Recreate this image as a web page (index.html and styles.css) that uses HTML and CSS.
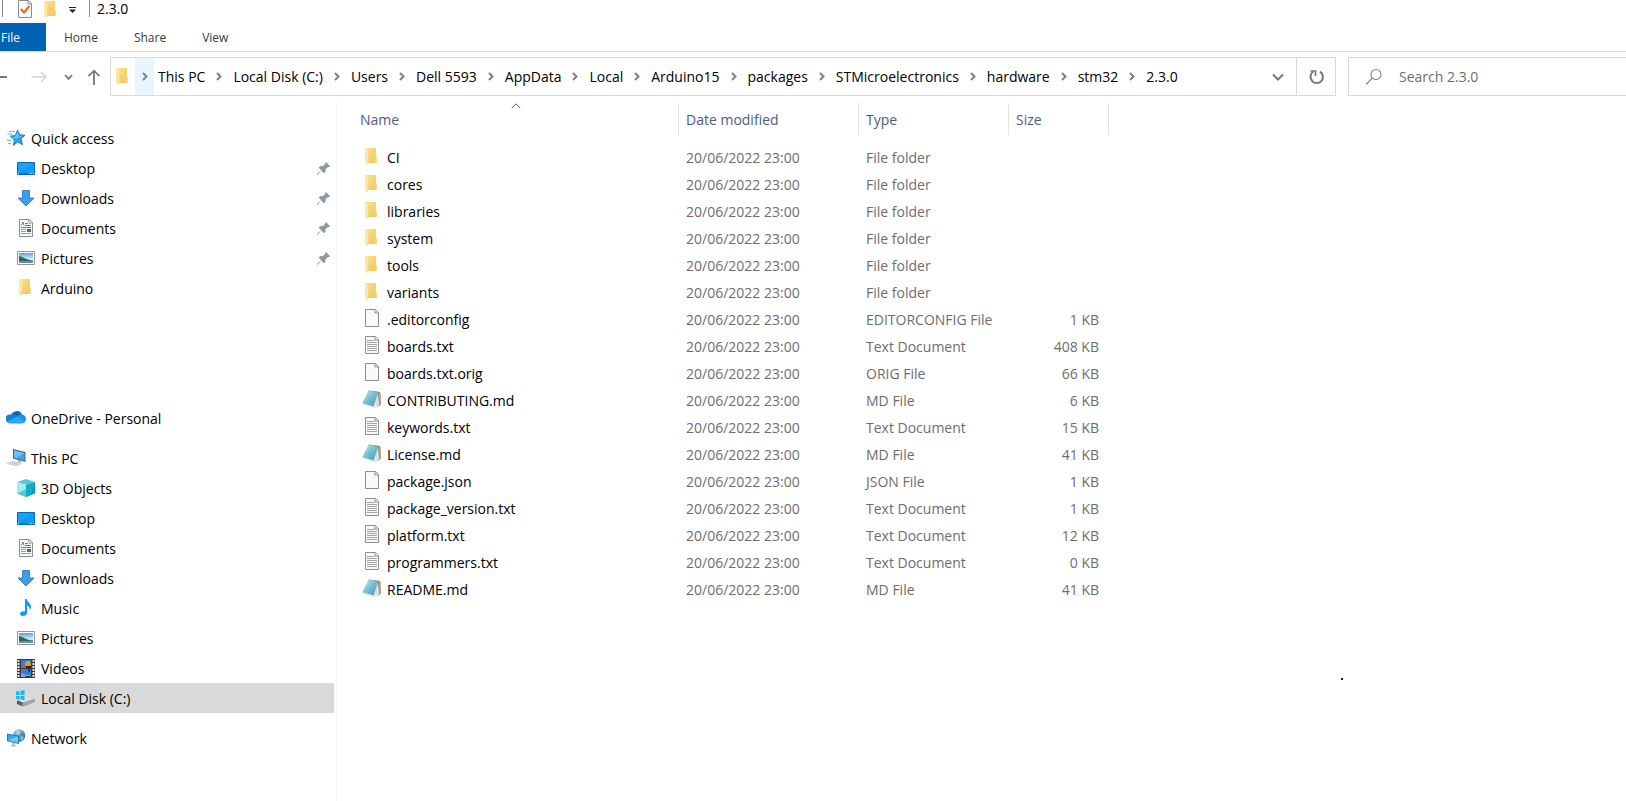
FILE: index.html
```html
<!DOCTYPE html>
<html lang="en">
<head>
<meta charset="utf-8">
<title>2.3.0</title>
<link rel="stylesheet" href="styles.css">
</head>
<body>
<svg class="sprite" aria-hidden="true">
  <defs>
    <linearGradient id="gFolder" x1="0" y1="0" x2="1" y2="1"><stop offset="0" stop-color="#ffe392"/><stop offset=".5" stop-color="#f6d375"/><stop offset="1" stop-color="#eec661"/></linearGradient>
    <linearGradient id="gFolderR" x1="0" x2="1"><stop offset="0" stop-color="#f0cb68"/><stop offset="1" stop-color="#ffe08a"/></linearGradient>
    <linearGradient id="gDesk" x1="0" y1="0" x2="1" y2="1"><stop offset="0" stop-color="#1ba1f8"/><stop offset=".5" stop-color="#16a0ff"/><stop offset=".52" stop-color="#0b95f5"/><stop offset="1" stop-color="#19a4ff"/></linearGradient>
    <linearGradient id="gSky" x1="0" y1="0" x2="0" y2="1"><stop offset="0" stop-color="#5e9fea"/><stop offset=".6" stop-color="#d9ecfa"/><stop offset="1" stop-color="#a8cbe0"/></linearGradient>
    <linearGradient id="gNote" x1="0" y1="0" x2="1" y2="1"><stop offset="0" stop-color="#c9e9f0"/><stop offset=".5" stop-color="#75bfd0"/><stop offset="1" stop-color="#3f9db5"/></linearGradient>
    <linearGradient id="gDisk" x1="0" x2="1"><stop offset="0" stop-color="#4c4f50"/><stop offset="1" stop-color="#b5b7b8"/></linearGradient>
    <linearGradient id="gGlobe" x1="0" y1="0" x2="1" y2="1"><stop offset="0" stop-color="#a7d4ea"/><stop offset="1" stop-color="#15618d"/></linearGradient>
  </defs>
  <symbol id="folder" viewBox="0 0 20 20">
    <path d="M3 1h11v9l1 1v5H5z" fill="url(#gFolder)"/>
    <path d="M12 1h2v9l1 1v5h-3z" fill="url(#gFolderR)" opacity=".8"/>
    <path d="M3 1.3l3.6 1.4V14l-1.2 4L3 16z" fill="#ffe8a5"/>
    <path d="M6.4 3v11.3l-1 3.4" fill="none" stroke="#f0d078" stroke-width=".6"/>
  </symbol>
  <symbol id="file" viewBox="0 0 20 20">
    <path d="M3.5.5h10l3 3v14h-13z" fill="#f8fafc" stroke="#8d8d8d"/>
    <path d="M13 .5v3.5h3.5" fill="#fff" stroke="#8d8d8d"/>
  </symbol>
  <symbol id="text" viewBox="0 0 20 20">
    <path d="M3.5.5h10l3 3v14h-13z" fill="#f8f8f8" stroke="#8d8d8d"/>
    <path d="M13 .5v3.5h3.5" fill="#fff" stroke="#8d8d8d"/>
    <path d="M5 4.5h7M5 6.5h10M5 8.5h10M5 10.5h10M5 12.5h10M5 14.5h10" stroke="#a5a5a5"/>
  </symbol>
  <symbol id="md" viewBox="0 0 20 20">
    <path d="M7 .5l10 1.2 1.6 1.5.2 11.3-2.8 2.5-3-4z" fill="#8d8067"/>
    <path d="M16.8 2.2l-.4 13.2 1.200-.8.500-10.800z" fill="#b9ab8b"/>
    <path d="M15.500 3.600L17 14.800l-1 2.600-5.200.500z" fill="#e4edf2"/>
    <path d="M15.400 4.200L14 12l2.200 5" fill="none" stroke="#b4c7d1" stroke-width=".7"/>
    <path d="M6.500.8l9.300 1.500-4 14.200L.2 13.300z" fill="url(#gNote)"/>
    <path d="M6.500 1l9.200 1.500" stroke="#9eb1b8" stroke-dasharray="1 1"/>
    <path d="M.2 13.400l11.400 3.200 1 1.200L1 14.600z" fill="#c9dce4"/>
  </symbol>
  <symbol id="star" viewBox="0 0 20 20">
    <path d="M11.500 2l2.200 4.800 5.300.4-4 3.600 1.600 6-5-2.800-4.200 3.400.9-5.500-4-3.800 5-.5z" fill="#2f9fe8" stroke="#1272b8" stroke-width=".8"/>
    <path d="M11.300 4l1.600 3.700 3.600.4-6.300 2.400-5-.9 4-.8z" fill="#67c3f8"/>
    <path d="M3 3.500h6M1.500 6h5M1 12.500h4M2 15.500h3" stroke="#5db6ea"/>
  </symbol>
  <symbol id="desktop" viewBox="0 0 20 20">
    <path d="M1.500 4.500h17v12h-17z" fill="url(#gDesk)" stroke="#0669ad"/>
    <path d="M2 15.500h16" stroke="#0b74c2"/>
    <path d="M2 15.500h1M13 15.500h1M15 15.500h1M17 15.500h1" stroke="#fff"/>
  </symbol>
  <symbol id="download" viewBox="0 0 20 20">
    <path d="M6.500 2.500h7V10H18l-8 8-8-8h4.500z" fill="#3e9dea" stroke="#2573bd" stroke-width=".8"/>
  </symbol>
  <symbol id="document" viewBox="0 0 20 20">
    <path d="M3.500 1.500h10l3 3v14h-13z" fill="#fbfbfb" stroke="#8d8d8d"/>
    <path d="M13 1.500v3.500h3.500" fill="#fff" stroke="#8d8d8d"/>
    <path d="M5 7.500L7 4l1 3.500M9 5.500h3M9 7.500h6M5 9.500h10" fill="none" stroke="#2490dc"/>
    <path d="M5 11.500h5M5 13.500h5M5 15.500h10" stroke="#9d9d9d"/>
    <path d="M11 11h4v3h-4z" fill="#2f6fac"/>
  </symbol>
  <symbol id="picture" viewBox="0 0 20 20">
    <path d="M1.500 3.500h17v13h-17z" fill="#fff" stroke="#969696"/>
    <path d="M3 5h14v10H3z" fill="url(#gSky)"/>
    <path d="M3 8c3 0 6 4 14 4.500V13H3z" fill="#2f6553"/>
    <path d="M3 13h14v2H3z" fill="#6293ab"/>
  </symbol>
  <symbol id="cloud" viewBox="0 0 20 20">
    <path d="M5 8a5.800 5.800 0 0 1 11-1.500L18 13 3 13z" fill="#0f64b8"/>
    <path d="M4 6.500q4-1 7 2L3.500 15A4.200 4.200 0 0 1 4 6.500z" fill="#1381d8"/>
    <path d="M11 8.500q2-2.500 5-2 4 .7 4 4.500 0 3-2.500 4z" fill="#1b93e6"/>
    <path d="M1 13.500L11 8.500l8 5q-1 2-3 2H4q-2 0-3-2z" fill="#29a9ec"/>
  </symbol>
  <symbol id="pc" viewBox="0 0 20 20">
    <path d="M7 1l12.500 3v10L7 10.500z" fill="#53646f"/>
    <path d="M8.200 2.400L18.500 5v7.700L8.200 9.600z" fill="#35a5ee"/>
    <path d="M8.200 2.400L18.500 5l-8 5.300-2.300-.7z" fill="#69c1f6"/>
    <path d="M12 12l3 1v3l-4-1z" fill="#adb5b9"/>
    <path d="M1 15l6-2 10 2.500-5 2.500z" fill="#d9dce3"/>
    <path d="M1 15.300l10 2.700M4 14l9 2.500" stroke="#aeb3bd" stroke-width=".7"/>
  </symbol>
  <symbol id="cube" viewBox="0 0 20 20">
    <path d="M1 4l9-3 9 3-9 3z" fill="#58cbd8"/>
    <path d="M1 4l9 3v12l-9-3.500z" fill="#a6edf0"/>
    <path d="M1 15.500L10 11v8z" fill="#4ecbd7"/>
    <path d="M10 7l9-3v11.500L10 19z" fill="#079cb7"/>
    <path d="M10 7l9-3-4 13-5 2z" fill="#18abc4"/>
  </symbol>
  <symbol id="music" viewBox="0 0 20 20">
    <path d="M9 1h1.600c.4 3 5 4.500 4.400 9l-1.400 2c.3-3-1-4.200-2.600-4.600V15c0 1.700-2 3-4.200 3S4 17 4 15.600 6 13 9 13.200z" fill="#0a9cf4"/>
  </symbol>
  <symbol id="video" viewBox="0 0 20 20">
    <path d="M1 1h18v19H1z" fill="#3b3b3b"/>
    <path d="M2.500 2v18M17.500 2v18" stroke="#e7e7e7" stroke-width="2" stroke-dasharray="2 1"/>
    <path d="M5 2h10v8H5zM5 11h10v8H5z" fill="#3f78d8"/>
    <path d="M9 5l2-2h3l1 3-1 3h-4z" fill="#d8a11e"/>
    <path d="M5 8h5v2H5z" fill="#d83f5b"/>
    <path d="M10 8h5v2h-5zM12 11h2v3h-1zM9 17h5v2H9z" fill="#272416"/>
    <path d="M5 15l4 1 1 3H5z" fill="#78a5e9"/>
    <path d="M10 17h4v1h-4z" fill="#edb82b"/>
  </symbol>
  <symbol id="disk" viewBox="0 0 20 20">
    <path d="M1 13l7-4 11 2v3L7 18.500 1 16z" fill="url(#gDisk)"/>
    <path d="M2 12.500L8 8.500l10.500 2.200L7 14.500z" fill="#e2e4e5"/>
    <path d="M7 14.500l12-3.500v3L7 18z" fill="#a4a6a7"/>
    <path d="M6 16.500h1.500v1H6z" fill="#51da68"/>
    <path d="M0 3.500l3.500-.500v4H0zM4.500 2.800L8.500 2v5h-4zM0 8h3.500v3.500L0 11zM4.500 8h4v4.200l-4-.6z" fill="#16b8ef"/>
  </symbol>
  <symbol id="network" viewBox="0 0 20 20">
    <circle cx="13" cy="7.500" r="6.300" fill="url(#gGlobe)"/>
    <path d="M11 2l4 1-2 4-3-1zM15 8l3 1-2 4-2-2z" fill="#d7f0f5" opacity=".55"/>
    <path d="M1 5.500l12 2.200V16L1 13.200z" fill="#247cb5"/>
    <path d="M2 6.700l10 1.800v6.200L2 12.300z" fill="#31acf1"/>
    <path d="M2 12.300l10-3.800v6.200z" fill="#75caf8"/>
    <path d="M6 14.500l3 .7v2l2 .8-3 1-4-1.200 2-1z" fill="#b7c4ce"/>
  </symbol>
  <symbol id="pin" viewBox="0 0 20 20">
    <path d="M12 4l4.200 4.200-1.200.8-1-.1-2.700 2.700.3 2-1.600 1.600-2.900-2.800L4 16.500l-1 .3.300-1.200 4-3.300-2.800-2.900L6.500 8l2.300.2 2.700-2.700-.1-.9z" fill="#8c99a2"/>
  </symbol>
  <symbol id="next" viewBox="0 0 10 10"><path d="M3 1L6.500 4.500 3 8" fill="none" stroke="#808080" stroke-width="2"/></symbol>
</svg>

<header>
  <div class="titlebar">
    <span class="rule"></span>
    <button class="quick" aria-label="Properties"><svg viewBox="0 0 20 20"><path d="M3.500.500h10l3 3v14h-13z" fill="#fafafa" stroke="#8d8d8d"/><path d="M13 .500v3.500h3.500" fill="#fff" stroke="#8d8d8d"/><path d="M6 9l3 3.500L14.500 6" fill="none" stroke="#f0641e" stroke-width="2"/></svg></button>
    <button class="quick" aria-label="New folder"><svg><use href="#folder"/></svg></button>
    <button class="quick more" aria-label="Customize"><svg viewBox="0 0 20 20"><path d="M7 7.500h7" stroke="#222"/><path d="M7 9.500h7L10.500 13z" fill="#222"/></svg></button>
    <span class="rule"></span>
    <h1>2.3.0</h1>
  </div>
  <nav class="ribbon" aria-label="Ribbon">
    <button class="file-tab">File</button><button>Home</button><button>Share</button><button>View</button>
  </nav>
  <div class="toolbar">
    <button class="back" aria-label="Back"><svg viewBox="0 0 20 20"><path d="M0 10h7" stroke="#555" stroke-width="1.600"/></svg></button>
    <button class="forward" aria-label="Forward"><svg viewBox="0 0 20 20"><path d="M2.500 10H17M12 5l5 5-5 5" fill="none" stroke="#d4d4d4" stroke-width="1.500"/></svg></button>
    <button class="recent" aria-label="Recent locations"><svg viewBox="0 0 20 20"><path d="M6 8l3.500 3.800L13 8" fill="none" stroke="#777" stroke-width="1.800"/></svg></button>
    <button class="up" aria-label="Up"><svg viewBox="0 0 20 20"><path d="M10 18V4M4.500 9.200L10 3.700l5.500 5.500" fill="none" stroke="#777" stroke-width="1.800"/></svg></button>
    <div class="address">
      <svg class="icon place"><use href="#folder"/></svg>
      <button class="root" aria-label="Expand"><svg class="next"><use href="#next"/></svg></button>
      <nav class="crumbs" aria-label="Path">
        <a href="#">This PC</a><svg class="next"><use href="#next"/></svg>
        <a href="#">Local Disk (C:)</a><svg class="next"><use href="#next"/></svg>
        <a href="#">Users</a><svg class="next"><use href="#next"/></svg>
        <a href="#">Dell 5593</a><svg class="next"><use href="#next"/></svg>
        <a href="#">AppData</a><svg class="next"><use href="#next"/></svg>
        <a href="#">Local</a><svg class="next"><use href="#next"/></svg>
        <a href="#">Arduino15</a><svg class="next"><use href="#next"/></svg>
        <a href="#">packages</a><svg class="next"><use href="#next"/></svg>
        <a href="#">STMicroelectronics</a><svg class="next"><use href="#next"/></svg>
        <a href="#">hardware</a><svg class="next"><use href="#next"/></svg>
        <a href="#">stm32</a><svg class="next"><use href="#next"/></svg>
        <a href="#">2.3.0</a>
      </nav>
      <button class="history" aria-label="Previous locations"><svg viewBox="0 0 20 20"><path d="M5 7.500l5 5 5-5" fill="none" stroke="#777" stroke-width="2"/></svg></button>
      <button class="refresh" aria-label="Refresh"><svg viewBox="0 0 20 20"><path d="M14 4.600A6.200 6.200 0 1 1 7.100 4.800" fill="none" stroke="#777" stroke-width="2"/><path d="M4.500 4h5v5" fill="none" stroke="#777" stroke-width="1.600"/></svg></button>
    </div>
    <label class="search">
      <svg viewBox="0 0 20 20"><circle cx="12" cy="7.500" r="5" fill="none" stroke="#888" stroke-width="1.100"/><path d="M8.300 11L2 17.500" stroke="#888" stroke-width="1.300"/></svg>
      <input type="text" placeholder="Search 2.3.0" aria-label="Search 2.3.0">
    </label>
  </div>
</header>

<main>
  <nav class="places" aria-label="Places">
    <ul class="quick-access">
      <li><a href="#"><svg class="icon"><use href="#star"/></svg>Quick access</a></li>
      <li class="child"><a href="#"><svg class="icon"><use href="#desktop"/></svg>Desktop<svg class="icon pin"><use href="#pin"/></svg></a></li>
      <li class="child"><a href="#"><svg class="icon"><use href="#download"/></svg>Downloads<svg class="icon pin"><use href="#pin"/></svg></a></li>
      <li class="child"><a href="#"><svg class="icon"><use href="#document"/></svg>Documents<svg class="icon pin"><use href="#pin"/></svg></a></li>
      <li class="child"><a href="#"><svg class="icon"><use href="#picture"/></svg>Pictures<svg class="icon pin"><use href="#pin"/></svg></a></li>
      <li class="child"><a href="#"><svg class="icon"><use href="#folder"/></svg>Arduino</a></li>
    </ul>
    <ul>
      <li><a href="#"><svg class="icon"><use href="#cloud"/></svg>OneDrive - Personal</a></li>
    </ul>
    <ul>
      <li><a href="#"><svg class="icon"><use href="#pc"/></svg>This PC</a></li>
      <li class="child"><a href="#"><svg class="icon"><use href="#cube"/></svg>3D Objects</a></li>
      <li class="child"><a href="#"><svg class="icon"><use href="#desktop"/></svg>Desktop</a></li>
      <li class="child"><a href="#"><svg class="icon"><use href="#document"/></svg>Documents</a></li>
      <li class="child"><a href="#"><svg class="icon"><use href="#download"/></svg>Downloads</a></li>
      <li class="child"><a href="#"><svg class="icon"><use href="#music"/></svg>Music</a></li>
      <li class="child"><a href="#"><svg class="icon"><use href="#picture"/></svg>Pictures</a></li>
      <li class="child"><a href="#"><svg class="icon"><use href="#video"/></svg>Videos</a></li>
      <li class="child current"><a href="#" aria-current="true"><svg class="icon"><use href="#disk"/></svg>Local Disk (C:)</a></li>
    </ul>
    <ul>
      <li><a href="#"><svg class="icon"><use href="#network"/></svg>Network</a></li>
    </ul>
  </nav>
  <section class="files">
    <table>
      <colgroup><col class="c-name"><col class="c-date"><col class="c-type"><col class="c-size"></colgroup>
      <thead>
        <tr><th aria-sort="ascending"><span class="head">Name</span><svg class="sort" viewBox="0 0 10 6"><path d="M.8 5L5 .8 9.200 5" fill="none" stroke="#555"/></svg></th><th><span class="head">Date modified</span></th><th><span class="head">Type</span></th><th><span class="head">Size</span></th></tr>
      </thead>
      <tbody>
        <tr><td><a href="#"><svg class="icon"><use href="#folder"/></svg>CI</a></td><td>20/06/2022 23:00</td><td>File folder</td><td></td></tr>
        <tr><td><a href="#"><svg class="icon"><use href="#folder"/></svg>cores</a></td><td>20/06/2022 23:00</td><td>File folder</td><td></td></tr>
        <tr><td><a href="#"><svg class="icon"><use href="#folder"/></svg>libraries</a></td><td>20/06/2022 23:00</td><td>File folder</td><td></td></tr>
        <tr><td><a href="#"><svg class="icon"><use href="#folder"/></svg>system</a></td><td>20/06/2022 23:00</td><td>File folder</td><td></td></tr>
        <tr><td><a href="#"><svg class="icon"><use href="#folder"/></svg>tools</a></td><td>20/06/2022 23:00</td><td>File folder</td><td></td></tr>
        <tr><td><a href="#"><svg class="icon"><use href="#folder"/></svg>variants</a></td><td>20/06/2022 23:00</td><td>File folder</td><td></td></tr>
        <tr><td><a href="#"><svg class="icon"><use href="#file"/></svg>.editorconfig</a></td><td>20/06/2022 23:00</td><td>EDITORCONFIG File</td><td>1 KB</td></tr>
        <tr><td><a href="#"><svg class="icon"><use href="#text"/></svg>boards.txt</a></td><td>20/06/2022 23:00</td><td>Text Document</td><td>408 KB</td></tr>
        <tr><td><a href="#"><svg class="icon"><use href="#file"/></svg>boards.txt.orig</a></td><td>20/06/2022 23:00</td><td>ORIG File</td><td>66 KB</td></tr>
        <tr><td><a href="#"><svg class="icon"><use href="#md"/></svg>CONTRIBUTING.md</a></td><td>20/06/2022 23:00</td><td>MD File</td><td>6 KB</td></tr>
        <tr><td><a href="#"><svg class="icon"><use href="#text"/></svg>keywords.txt</a></td><td>20/06/2022 23:00</td><td>Text Document</td><td>15 KB</td></tr>
        <tr><td><a href="#"><svg class="icon"><use href="#md"/></svg>License.md</a></td><td>20/06/2022 23:00</td><td>MD File</td><td>41 KB</td></tr>
        <tr><td><a href="#"><svg class="icon"><use href="#file"/></svg>package.json</a></td><td>20/06/2022 23:00</td><td>JSON File</td><td>1 KB</td></tr>
        <tr><td><a href="#"><svg class="icon"><use href="#text"/></svg>package_version.txt</a></td><td>20/06/2022 23:00</td><td>Text Document</td><td>1 KB</td></tr>
        <tr><td><a href="#"><svg class="icon"><use href="#text"/></svg>platform.txt</a></td><td>20/06/2022 23:00</td><td>Text Document</td><td>12 KB</td></tr>
        <tr><td><a href="#"><svg class="icon"><use href="#text"/></svg>programmers.txt</a></td><td>20/06/2022 23:00</td><td>Text Document</td><td>0 KB</td></tr>
        <tr><td><a href="#"><svg class="icon"><use href="#md"/></svg>README.md</a></td><td>20/06/2022 23:00</td><td>MD File</td><td>41 KB</td></tr>
      </tbody>
    </table>
    <span class="speck"></span>
  </section>
</main>
</body>
</html>
```

FILE: styles.css
```css
* { box-sizing: border-box; }

body {
  margin: 0;
  min-height: 100vh;
  display: flex;
  flex-direction: column;
  background: #fff;
  color: #000;
  font: 14px/20px "Open Sans", "Noto Sans", sans-serif;
  overflow-x: hidden;
}

a { color: inherit; text-decoration: none; }
ul { list-style: none; margin: 0; padding: 0; }
svg { display: block; flex: none; }
.sprite { position: absolute; width: 0; height: 0; }
.icon { width: 20px; height: 20px; }

button {
  margin: 0;
  padding: 0;
  border: 0;
  background: none;
  color: inherit;
  font: inherit;
  display: flex;
  align-items: center;
  justify-content: center;
}
button svg { width: 20px; height: 20px; }

/* Title bar */
.titlebar {
  display: flex;
  align-items: flex-start;
  height: 23px;
  padding-left: 2px;
}
.rule { width: 1px; height: 17px; background: #8a8a8a; }
.quick { width: 20px; height: 18px; margin-left: 12px; align-items: flex-start; }
.quick + .quick { margin-left: 6px; }
.quick + .quick.more { margin: 0 7px 0 1px; }
.titlebar h1 { margin: 0 0 0 7px; font-size: 14px; line-height: 18px; font-weight: 400; }

/* Ribbon */
.ribbon {
  display: flex;
  height: 29px;
  border-bottom: 1px solid #dadbdc;
  font-size: 12px;
  color: #3a3a3a;
}
.ribbon button { padding: 2px 18px 0; }
.ribbon .file-tab { width: 46px; padding: 2px 25px 0 0; background: #0063b1; color: #fff; }

/* Toolbar */
.toolbar { display: flex; height: 44px; padding-top: 5px; }
.back { width: 20px; }
.forward { width: 37px; }
.recent { width: 24px; }
.up { width: 26px; }
.address {
  flex: 1;
  display: flex;
  align-items: stretch;
  margin-left: 3px;
  border: 1px solid #d9d9d9;
}
.place { margin: 9px 2px 0; }
.root { width: 19px; background: #e9f5fe; }
.next, button svg.next { width: 10px; height: 10px; }
.crumbs { flex: 1; display: flex; align-items: center; gap: 9px; padding-left: 4px; white-space: nowrap; }
.history { width: 36px; }
.refresh { width: 39px; border-left: 1px solid #d9d9d9; }
.search {
  flex: 0 0 278px;
  display: flex;
  align-items: center;
  margin-left: 12px;
  padding-left: 15px;
  border: 1px solid #d9d9d9;
  border-right: 0;
}
.search svg { width: 20px; height: 20px; }
.search input {
  flex: 1;
  min-width: 0;
  margin: 0 0 0 15px;
  padding: 0;
  border: 0;
  outline: 0;
  background: none;
  font: inherit;
  color: #6d6d6d;
}
.search input::placeholder { color: #6d6d6d; opacity: 1; }

/* Places */
main { flex: 1; display: flex; padding-top: 7px; }
.places { flex: 0 0 337px; padding: 20px 2px 0 0; border-right: 1px solid #f3f3f3; }
.places ul { margin-bottom: 10px; }
.places .quick-access { margin-bottom: 100px; }
.places a { display: flex; align-items: center; gap: 5px; height: 30px; padding-left: 6px; line-height: 22px; padding-top: 1px; }
.places .child a { padding-left: 16px; }
.places .icon { margin-bottom: 2px; }
.places .pin { margin-left: auto; }
.places .current { background: #d9d9d9; }

/* File list */
.files { flex: 1; position: relative; padding-left: 11px; }
table { border-collapse: collapse; table-layout: fixed; width: 761px; }
.c-name { width: 331px; }
.c-date { width: 180px; }
.c-type { width: 150px; }
.c-size { width: 100px; }
th { position: relative; height: 41px; padding: 0; vertical-align: top; text-align: left; font-weight: 400; color: #4c607a; }
.head { display: block; height: 32px; padding-left: 7px; line-height: 34px; border-right: 1px solid #e3e3e3; }
th:first-child .head { padding-left: 12px; }
.sort { position: absolute; top: 0; left: 163px; width: 10px; height: 6px; }
td { height: 27px; padding: 0 0 0 7px; color: #6d6d6d; white-space: nowrap; }
td:first-child { padding-left: 14px; }
td:last-child { padding: 0 10px 0 0; text-align: right; }
td a { display: flex; align-items: center; gap: 5px; color: #000; }
td .icon { margin-bottom: 2px; }
.speck { position: absolute; left: 1004px; top: 575px; width: 2px; height: 2px; background: #222; }
```
